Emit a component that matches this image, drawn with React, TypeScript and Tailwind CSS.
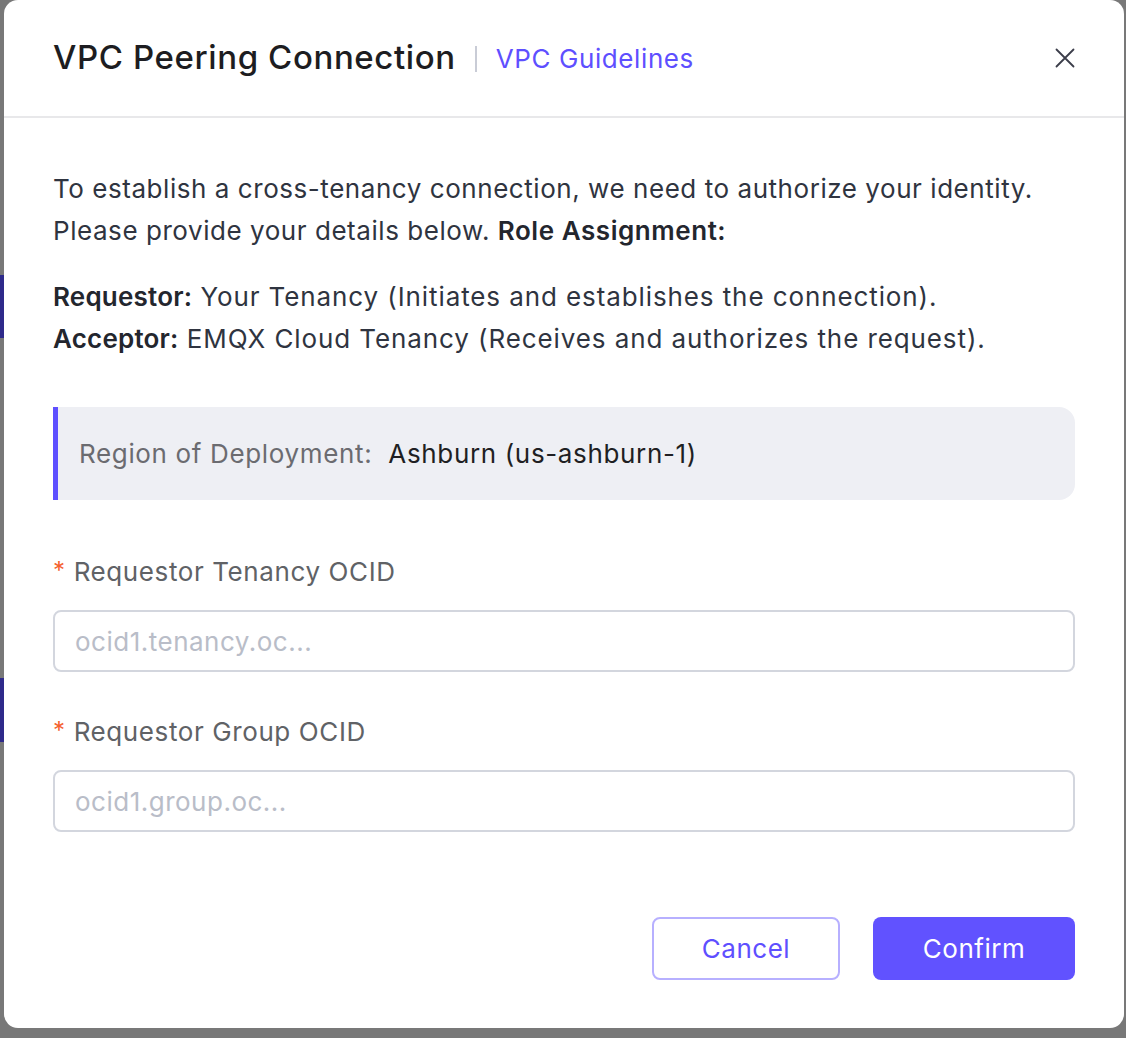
import React, { useState } from 'react';

function CloseIcon() {
  return (
    <svg width="20" height="20" viewBox="0 0 20 20" fill="none">
      <path d="M1.5 1.5 L18.5 18.5 M18.5 1.5 L1.5 18.5" stroke="#3b3d4a" strokeWidth="1.8" strokeLinecap="round" />
    </svg>
  );
}

function Field({ label, placeholder }: { label: string; placeholder: string }) {
  const [value, setValue] = useState('');
  return (
    <div className="flex flex-col">
      <label className="flex items-center h-[40px] text-[26px] tracking-[0.6px] text-[#606266]">
        <span className="text-[#f5612e] mr-[8px] text-[24px]">*</span>
        {label}
      </label>
      <input
        value={value}
        onChange={e => setValue(e.target.value)}
        placeholder={placeholder}
        className="mt-[19px] h-[62px] w-full rounded-[8px] border-2 border-[#d3d6de] px-[20px] text-[26px] tracking-[0.5px] text-[#303133] placeholder:text-[#b9bdc8] outline-none"
      />
    </div>
  );
}

function App() {
  return (
    <div
      className="relative w-[1126px] h-[1038px] overflow-hidden bg-[#787878]"
      style={{ fontFamily: 'Inter, "Noto Sans", sans-serif' }}
    >
      {/* page behind the overlay, only a sliver shows on the left */}
      <div className="flex flex-col w-[4px] pt-[275px]">
        <div className="h-[63px] bg-[#2e2a8a]" />
        <div className="h-[340px]" />
        <div className="h-[64px] bg-[#2e2a8a]" />
      </div>

      <div className="absolute left-[4px] top-0 w-[1120px] h-[1028px] bg-white rounded-[14px] flex flex-col">
        {/* header */}
        <div className="h-[118px] shrink-0 flex items-center px-[49px] border-b-2 border-[#e8e8ea]">
          <h1 className="text-[33px] font-medium text-[#1d1d21] tracking-[0.6px]">VPC Peering Connection</h1>
          <span className="w-[2px] h-[26px] bg-[#c9ccd6] mx-[19px] mt-[2px]" />
          <a className="text-[26px] tracking-[0.6px] text-[#5e4fff] cursor-pointer">VPC Guidelines</a>
          <button className="ml-auto mr-[-2px] p-[2px]">
            <CloseIcon />
          </button>
        </div>

        {/* body */}
        <div className="flex-1 flex flex-col px-[49px] pt-[50px] pb-[48px] text-[26px] tracking-[0.5px]">
          <p className="leading-[42px] text-[#2f3440] tracking-[0.55px]">
            To establish a cross-tenancy connection, we need to authorize your identity.
            <br />
            Please provide your details below. <strong className="font-semibold text-[#23262e]">Role Assignment:</strong>
          </p>
          <p className="mt-[24px] leading-[42px] text-[#2f3440] tracking-[0.9px]">
            <strong className="font-semibold text-[#23262e] tracking-[0.2px]">Requestor:</strong> Your Tenancy
            (Initiates and establishes the connection).
            <br />
            <strong className="font-semibold text-[#23262e] tracking-[0.2px]">Acceptor:</strong> EMQX Cloud Tenancy
            (Receives and authorizes the request).
          </p>

          <div className="mt-[47px] h-[93px] flex items-center bg-[#eeeff4] border-l-[5px] border-[#5e4fff] rounded-r-[16px] pl-[21px] tracking-[0.65px]">
            <span className="text-[#6b6b70]">Region of Deployment:</span>
            <span className="ml-[16px] text-[#1f1f23]">Ashburn (us-ashburn-1)</span>
          </div>

          <div className="mt-[51px] flex flex-col gap-[39px]">
            <Field label="Requestor Tenancy OCID" placeholder="ocid1.tenancy.oc..." />
            <Field label="Requestor Group OCID" placeholder="ocid1.group.oc..." />
          </div>

          <div className="mt-auto flex justify-end gap-[33px]">
            <button className="w-[188px] h-[63px] rounded-[8px] border-2 border-[#b7b0ff] bg-white text-[#5e4fff]">
              Cancel
            </button>
            <button className="w-[202px] h-[63px] rounded-[8px] bg-[#6152ff] text-white">
              Confirm
            </button>
          </div>
        </div>
      </div>
    </div>
  );
}

export default App;
